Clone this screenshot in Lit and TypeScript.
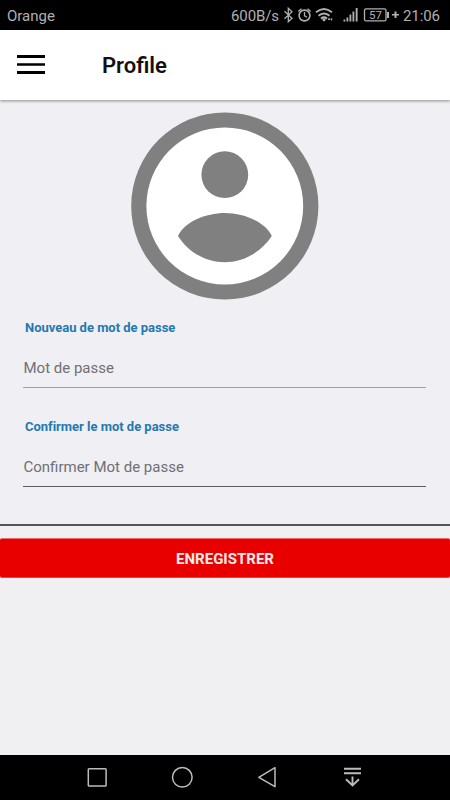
import { LitElement, html, css } from "lit";
import { customElement, property } from "lit/decorators.js";

@customElement("status-bar")
class StatusBar extends LitElement {
  static styles = css`
    :host { display: flex; align-items: center; height: 30px; background: #000; color: #b0b0b0; font-size: 15px; line-height: 30px; padding: 0 9px 0 7px; box-sizing: border-box; }
    .carrier { flex: 1; padding-top: 1px; }
    .speed { width: 53px; padding-top: 1px; white-space: nowrap; letter-spacing: -0.1px; }
    .time { width: 38px; padding-top: 1px; white-space: nowrap; letter-spacing: -0.1px; }
    svg { display: block; width: 119px; height: 30px; flex: none; }
    .line { fill: none; stroke: #b0b0b0; stroke-width: 1.3; }
    .clock { stroke-width: 1.6; }
    .arc { stroke-width: 2; }
    .solid { fill: #b0b0b0; }
    .level { font-size: 11.5px; fill: #b0b0b0; }
  `;
  render() {
    return html`
      <span class="carrier">Orange</span>
      <span class="speed">600B/s</span>
      <svg viewBox="284 0 119 30">
        <path class="line" d="M284.5 11.2L292 18.2L288.3 21.8V8.2L292 11.8L284.5 18.8" />
        <circle class="line clock" cx="304.5" cy="15.5" r="5.4" />
        <path class="line" d="M304.5 12V15.8L307 17.3M298.3 11.4L301.5 8.7M310.7 11.4L307.5 8.7" />
        <path class="line arc" d="M316 12.2Q324 5.7 332 12.2M318.5 15.8Q324 11.200 329.5 15.8M321 18.6Q324 16.200 327 18.600" />
        <circle class="solid" cx="324" cy="19.8" r="1.5" />
        <path class="solid" d="M329 17.500L330.300 20H327.700ZM331.500 21L330.300 18.500H332.700Z" />
        <path class="solid" d="M343.500 19.500h1.800v2h-1.800zM346.500 17.500h1.800v4h-1.800zM349.500 14.500h1.800v7h-1.800zM352.500 11.500h1.800v10h-1.800zM355.700 8h1.900v13.500h-1.900z" />
        <rect class="line" x="364.500" y="8.900" width="21.500" height="12" rx="1.500" />
        <path class="solid" d="M387 12h2v6h-2zM392 14h2.500v-2.500h2v2.500h2.500v1.600h-2.500v2.500h-2v-2.500h-2.500z" />
        <text class="level" x="369" y="19">57</text>
      </svg>
      <span class="time">21:06</span>
    `;
  }
}

@customElement("app-header")
class AppHeader extends LitElement {
  static styles = css`
    :host { display: flex; align-items: center; gap: 57px; height: 70px; padding: 0 17px; box-sizing: border-box; background: #fff; box-shadow: 0 1px 3px rgba(0, 0, 0, 0.42); position: relative; }
    svg { display: block; width: 28px; height: 20px; }
    h1 { margin: 2px 0 0; font-size: 22px; font-weight: 600; line-height: 30px; color: #111; }
  `;
  render() {
    return html`
      <svg viewBox="0 0 28 20"><path d="M0 0h28v3H0zM0 8.200h28v2.600H0zM0 16h28v3H0z" fill="#000" /></svg>
      <h1>Profile</h1>
    `;
  }
}

@customElement("password-field")
class PasswordField extends LitElement {
  @property() label = "";
  @property() placeholder = "";
  static styles = css`
    :host { display: block; height: 99px; }
    .label { display: block; padding-left: 2px; font-size: 13px; line-height: 18px; font-weight: 700; color: #2579af; letter-spacing: -0.02px; }
    input { display: block; width: 100%; height: 42px; box-sizing: border-box; margin-top: 9px; padding: 3px 0 0 0.5px; border: 0; border-bottom: 1px solid var(--rule, #a2a2a7); outline: 0; background: none; font: 15px Roboto, sans-serif; color: #333; }
    input::placeholder { color: #707075; opacity: 1; }
  `;
  render() {
    return html`<label class="label">${this.label}</label><input placeholder=${this.placeholder} />`;
  }
}

@customElement("nav-bar")
class NavBar extends LitElement {
  static styles = css`
    :host { display: block; height: 45px; background: #000; }
    svg { display: block; width: 450px; height: 45px; fill: none; stroke: #bcbcbc; stroke-width: 1.5; }
  `;
  render() {
    return html`<svg viewBox="0 755 450 45">
      <rect x="88.300" y="768.700" width="17.800" height="17.400" rx="0.800" />
      <circle cx="182.300" cy="777.300" r="9.800" />
      <path d="M258.800 777.300L275 767.700V786.700Z" stroke-linejoin="round" />
      <path d="M344 768.700H361M344 773.300H361M352.500 776.500V785.500M346 779.300L352.500 785.500L359 779.300" stroke-width="1.900" />
    </svg>`;
  }
}

@customElement("app-root")
class AppRoot extends LitElement {
  static styles = css`
    :host { display: flex; flex-direction: column; width: 450px; height: 800px; overflow: hidden; background: #efeff4; font-family: Roboto, sans-serif; }
    main { flex: 1; display: flex; flex-direction: column; }
    .avatar { display: block; width: 188px; height: 188px; margin: 12px 0 0 131px; flex: none; }
    .fields { padding: 19px 24px 0 23px; height: 224px; box-sizing: border-box; }
    .dark { --rule: #5c5c62; }
    .actions { flex: 1; border-top: 2px solid #555; padding-top: 12px; background: #f0f0f2; }
    button { display: block; width: 100%; height: 40px; padding: 1px 0 0; border: 1px solid #f06a6a; border-bottom-color: #d44; border-width: 1px 0; border-radius: 2px; background: #e80000; color: #ffeaea; font: 700 15px Roboto, sans-serif; }
  `;
  render() {
    return html`
      <status-bar></status-bar>
      <app-header></app-header>
      <main>
        <svg class="avatar" viewBox="131 112 188 188">
          <circle cx="224.800" cy="206" r="93.600" fill="#808080" />
          <circle cx="224.800" cy="206" r="78.400" fill="#fff" />
          <circle cx="224.800" cy="174.700" r="23.400" fill="#808080" />
          <path d="M178 236C184 222 206 213 224.800 213S265.600 222 271.800 236C261 252 244 262.200 224.800 262.200S188 252 178 236Z" fill="#808080" />
        </svg>
        <div class="fields">
          <password-field label="Nouveau de mot de passe" placeholder="Mot de passe"></password-field>
          <password-field class="dark" label="Confirmer le mot de passe" placeholder="Confirmer Mot de passe"></password-field>
        </div>
        <div class="actions"><button>ENREGISTRER</button></div>
      </main>
      <nav-bar></nav-bar>
    `;
  }
}
